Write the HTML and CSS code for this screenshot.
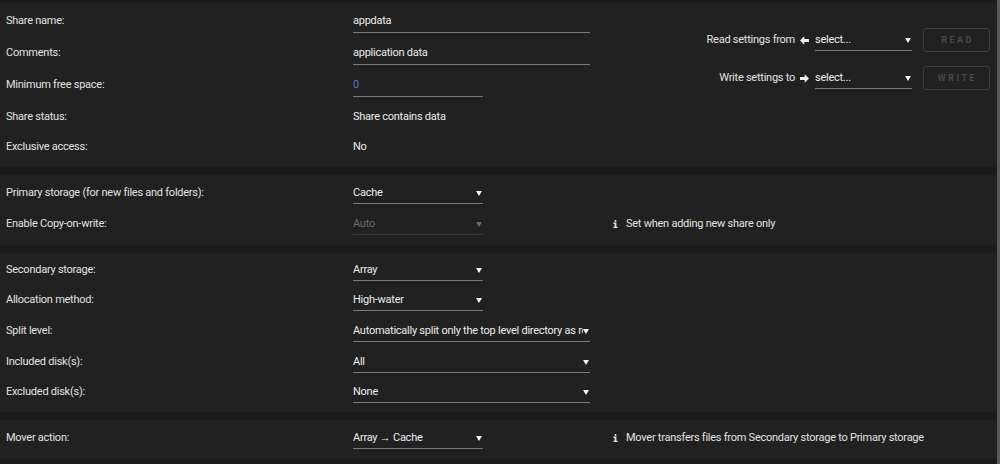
FILE: index.html
```html
<!DOCTYPE html>
<html lang="en">
<head>
    <meta charset="UTF-8">
    <title>Share Settings</title>
    <link rel="stylesheet" href="styles.css">
</head>
<body>
    <div class="page">
        <!-- Share identity -->
        <div class="section split">
            <div class="fields">
                <div class="row tall">
                    <div class="label">Share name:</div>
                    <div class="value"><input class="text wide" type="text" value="appdata"></div>
                </div>
                <div class="row tall">
                    <div class="label">Comments:</div>
                    <div class="value"><input class="text wide" type="text" value="application data"></div>
                </div>
                <div class="row tall">
                    <div class="label">Minimum free space:</div>
                    <div class="value"><input class="text narrow number" type="text" value="0"></div>
                </div>
                <div class="row">
                    <div class="label">Share status:</div>
                    <div class="value">Share contains data</div>
                </div>
                <div class="row">
                    <div class="label">Exclusive access:</div>
                    <div class="value">No</div>
                </div>
            </div>
            <div class="settings">
                <div class="setting-row">
                    <span>Read settings from</span>
                    <svg class="arrow" width="9" height="9" viewBox="0 0 9 9"><path d="M0 4.5 4.3 0.3 4.3 3 9 3 9 6 4.3 6 4.3 8.7Z"/></svg>
                    <div class="select tiny"><span class="select-text">select...</span><span class="caret"></span></div>
                    <button class="btn" disabled>READ</button>
                </div>
                <div class="setting-row">
                    <span>Write settings to</span>
                    <svg class="arrow" width="9" height="9" viewBox="0 0 9 9"><path d="M9 4.5 4.7 0.3 4.7 3 0 3 0 6 4.7 6 4.7 8.7Z"/></svg>
                    <div class="select tiny"><span class="select-text">select...</span><span class="caret"></span></div>
                    <button class="btn" disabled>WRITE</button>
                </div>
            </div>
        </div>

        <!-- Primary storage -->
        <div class="section">
            <div class="row mid">
                <div class="label">Primary storage (for new files and folders):</div>
                <div class="value"><div class="select narrow"><span class="select-text">Cache</span><span class="caret"></span></div></div>
            </div>
            <div class="row mid">
                <div class="label">Enable Copy-on-write:</div>
                <div class="value"><div class="select narrow disabled"><span class="select-text">Auto</span><span class="caret"></span></div></div>
                <div class="note">
                    <svg class="info" width="5" height="8" viewBox="0 0 5 8"><circle cx="2.5" cy="1" r="1"/><path d="M0.4 2.6H3.4V6.7H4.6V8H0.4V6.7H1.6V3.9H0.4Z"/></svg>
                    Set when adding new share only
                </div>
            </div>
        </div>

        <!-- Secondary storage -->
        <div class="section flush">
            <div class="row">
                <div class="label">Secondary storage:</div>
                <div class="value"><div class="select narrow"><span class="select-text">Array</span><span class="caret"></span></div></div>
            </div>
            <div class="row mid">
                <div class="label">Allocation method:</div>
                <div class="value"><div class="select narrow"><span class="select-text">High-water</span><span class="caret"></span></div></div>
            </div>
            <div class="row mid">
                <div class="label">Split level:</div>
                <div class="value"><div class="select wide"><span class="select-text">Automatically split only the top level directory as required</span><span class="caret"></span></div></div>
            </div>
            <div class="row">
                <div class="label">Included disk(s):</div>
                <div class="value"><div class="select wide"><span class="select-text">All</span><span class="caret"></span></div></div>
            </div>
            <div class="row">
                <div class="label">Excluded disk(s):</div>
                <div class="value"><div class="select wide"><span class="select-text">None</span><span class="caret"></span></div></div>
            </div>
        </div>

        <!-- Mover -->
        <div class="section">
            <div class="row">
                <div class="label">Mover action:</div>
                <div class="value"><div class="select narrow"><span class="select-text">Array → Cache</span><span class="caret"></span></div></div>
                <div class="note">
                    <svg class="info" width="5" height="8" viewBox="0 0 5 8"><circle cx="2.5" cy="1" r="1"/><path d="M0.4 2.6H3.4V6.7H4.6V8H0.4V6.7H1.6V3.9H0.4Z"/></svg>
                    Mover transfers files from Secondary storage to Primary storage
                </div>
            </div>
        </div>
    </div>
</body>
</html>
```

FILE: styles.css
```css
:root {
    font-family: Roboto, "Liberation Sans", sans-serif;
    font-size: 11px;
    letter-spacing: -0.25px;
    color: #e2e2e2;
    background: #1b1b1b;
}

body {
    margin: 0;
}

.page {
    min-height: 100vh;
    padding-top: 3px;
    border-right: 3px solid #595959;
    box-sizing: border-box;
}

.section {
    background: #212121;
    padding: 1px 0 7px;
    margin-bottom: 8px;
}

.section.flush {
    padding-top: 0;
}

.section.split {
    display: flex;
}

.fields {
    flex: 1;
}

.row {
    display: grid;
    grid-template-columns: 353px 260px 1fr;
    align-items: start;
    height: 30px;
    padding-top: 9px;
    box-sizing: border-box;
    line-height: 16px;
}

.row.tall {
    height: 32px;
}

.row.mid {
    height: 31px;
}

.label {
    padding-left: 6px;
}

.value {
    color: #ececec;
}

.text {
    display: block;
    font: inherit;
    letter-spacing: inherit;
    color: #ececec;
    background: transparent;
    border: none;
    border-bottom: 1px solid #7a7a7a;
    height: 16px;
    line-height: 16px;
    padding: 0 0 3px;
    outline: none;
}

.text.wide {
    width: 237px;
}

.text.narrow {
    width: 130px;
}

.text.number {
    color: #4f7bd0;
}

.select {
    display: flex;
    align-items: center;
    padding-bottom: 2px;
    border-bottom: 1px solid #7a7a7a;
    color: #ececec;
}

.select.narrow {
    width: 130px;
}

.select.wide {
    width: 237px;
}

.select.tiny {
    width: 97px;
    padding-top: 3px;
    margin-left: 6px;
}

.select-text {
    flex: 1;
    min-width: 0;
    overflow: hidden;
    white-space: nowrap;
}

.caret {
    width: 0;
    height: 0;
    margin-right: 1px;
    border-left: 3px solid transparent;
    border-right: 3px solid transparent;
    border-top: 5px solid #f0f0f0;
}

.select.disabled {
    color: #6b6b6b;
    border-bottom-color: #383838;
}

.select.disabled .caret {
    border-top-color: #6b6b6b;
}

.note {
    display: flex;
    align-items: center;
    gap: 8px;
}

.info {
    fill: #e2e2e2;
}

.settings {
    padding: 24px 7px 0 0;
    display: flex;
    flex-direction: column;
    gap: 14px;
}

.setting-row {
    display: flex;
    align-items: center;
    justify-content: flex-end;
    line-height: 16px;
}

.arrow {
    fill: #ececec;
    margin-left: 5px;
}

.btn {
    width: 67px;
    height: 24px;
    margin-left: 11px;
    font-family: inherit;
    font-size: 9px;
    font-weight: bold;
    letter-spacing: 2.5px;
    color: #484848;
    background: transparent;
    border: 1px solid #3c3c3c;
    border-radius: 3px;
    padding: 0 0 0 2px;
}
```
